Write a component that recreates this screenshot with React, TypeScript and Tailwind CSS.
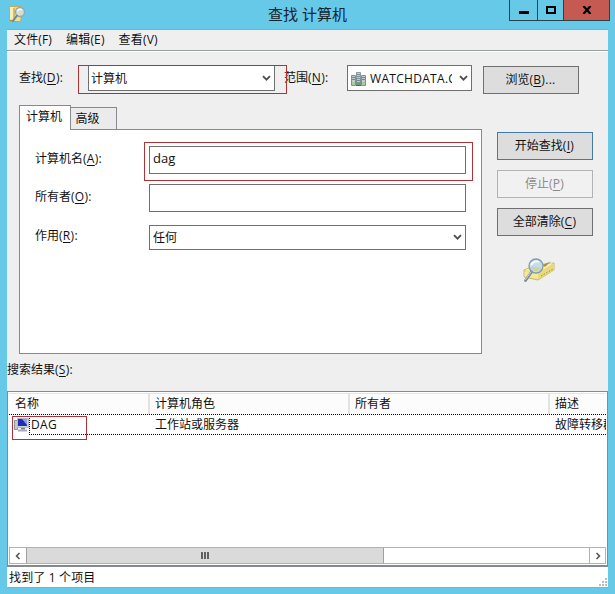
import { useState } from "react";
import type { ReactNode } from "react";

const columns = [
  { label: "名称", width: "w-[141px] pl-1.5" },
  { label: "计算机角色", width: "w-[200px] pl-[5px]" },
  { label: "所有者", width: "w-[200px] pl-[5px]" },
  { label: "描述", width: "w-[56px] pl-[5px]" },
];

const menus = [
  { text: "文件", hotkey: "F" },
  { text: "编辑", hotkey: "E" },
  { text: "查看", hotkey: "V" },
];

// Label with its underlined access key, e.g. 查找(D):
function Label({ text, hotkey, tail = "" }: { text: string; hotkey: string; tail?: string }) {
  return (
    <span className="whitespace-nowrap">
      {text}
      <span className="tracking-[0.3px]">
        (<u className="underline-offset-2">{hotkey}</u>){tail}
      </span>
    </span>
  );
}

function Chevron() {
  return (
    <svg width="9" height="7" viewBox="0 0 9 7" className="shrink-0">
      <path d="M1 1.200 4.500 4.700 8 1.200" fill="none" stroke="#505050" strokeWidth="1.900" />
    </svg>
  );
}

function ScrollArrow({ className = "" }: { className?: string }) {
  return (
    <svg width="6" height="8" viewBox="0 0 6 8" className={`shrink-0 ${className}`}>
      <path d="M4.500 1 1.500 4l3 3" fill="none" stroke="#505050" strokeWidth="1.500" />
    </svg>
  );
}

function Button({ children, variant = "normal" }: { children: ReactNode; variant?: "normal" | "default" | "disabled" }) {
  const styles = {
    normal: "border-[#707070] bg-[#dddddd]",
    default: "border-[#447ba6] bg-[#dddddd]",
    disabled: "border-[#b3b3b3] bg-[#f1f1f1] text-[#8a8a8a]",
  };
  return (
    <button
      disabled={variant === "disabled"}
      className={`flex h-7 w-24 shrink-0 items-center justify-center border pr-px leading-none ${styles[variant]}`}
    >
      {children}
    </button>
  );
}

function FolderSearchIcon() {
  return (
    <svg width="18" height="18" viewBox="0 0 18 18">
      <path d="M1.500 1.500H13V15l-1 1.500H1.500z" fill="#ecdf98" stroke="#c5ab59" />
      <path d="M2 2h3.500v12H2z" fill="#f8f0ba" />
      <path d="M6 3v12M2 15.500h4" stroke="#b3943e" />
      <circle cx="12" cy="7" r="4.500" fill="#d3e0d6" fillOpacity=".9" stroke="#91a7b0" strokeWidth="1.300" />
      <path d="M9.500 6q2-3 4.500-1" stroke="#fff" strokeWidth="1.500" fill="none" />
      <path d="m9 10.500-4 5.500" stroke="#78858b" strokeWidth="2" strokeLinecap="round" />
    </svg>
  );
}

function DomainIcon() {
  return (
    <svg width="16" height="16" viewBox="0 0 16 16" className="shrink-0">
      <path d="M5.500 1.500h4v9h-4z" fill="#c9d2d5" stroke="#899aa1" />
      <path d="M.5 4.500h4v10h-4zM10.500 4.500h4v10h-4zM5.500 7.500h4v7h-4z" fill="#c3ced2" stroke="#7d9097" />
      <path d="M6 3.500h3M6 5.500h3M1 6.500h3M1 8.500h3M11 6.500h3M11 8.500h3M6 9.500h3" stroke="#738891" />
      <path d="M1 11h3v3H1zM11 11h3v3h-3z" fill="#a9cb9d" />
      <path d="M6 11h3v4H6z" fill="#63a36d" />
      <path d="M5 14.500h5" stroke="#426c54" />
    </svg>
  );
}

function ComputerIcon() {
  return (
    <svg width="16" height="14" viewBox="0 0 16 14" className="shrink-0">
      <path d="M.5 2.500h3v9h-3z" fill="#c6c9cd" stroke="#8d9299" />
      <path d="M3.500.5h11v9h-11z" fill="#cfd5df" stroke="#b0b6c3" />
      <path d="M4 1h9v7H4z" fill="#1f2fb4" />
      <path d="M8 1h5v6z" fill="#8b9ce5" />
      <path d="M7 10h4v1.500H7z" fill="#777d89" />
      <path d="M4 12.500h9" stroke="#a5abb5" strokeWidth="2" />
    </svg>
  );
}

function SearchBookIcon() {
  return (
    <svg width="34" height="26" viewBox="0 0 34 26">
      <path d="m1 12 12-5 18-2v7L15 22 1 19z" fill="#eadc83" stroke="#c0ad55" strokeWidth=".8" />
      <path d="m2 12 11-4 17-3-14 9z" fill="#faf4be" />
      <path d="m16 14 15-8v6l-15 9z" fill="#e8da7b" />
      <path d="m19 7 9-3.500L22 9z" fill="#aa9142" />
      <path d="m18 18 12-7" stroke="#9d8c43" strokeDasharray="1.500 1.500" />
      <path d="M1.500 13.500H15v7.500L1.500 18.500z" fill="#f3e99d" />
      <circle cx="13" cy="8" r="7" fill="#c3dde9" fillOpacity=".95" stroke="#8299b2" strokeWidth="1.300" />
      <path d="M7.500 9q6-1 11 1a6 6 0 0 1-11-1z" fill="#cbd3a9" />
      <path d="M8 7q3-5 8-3" stroke="#fff" strokeWidth="1.800" fill="none" />
      <path d="m8.500 14-6 8.500" stroke="#7f8a95" strokeWidth="2.800" strokeLinecap="round" />
      <path d="m8 14-5.500 7.500" stroke="#d2d9df" strokeLinecap="round" />
    </svg>
  );
}

function TitleBar() {
  return (
    <header className="relative flex h-[29px] items-center justify-center">
      <div className="absolute left-2 top-[5px]">
        <FolderSearchIcon />
      </div>
      <h1 className="text-[15px] leading-none text-[#14242b]">查找 计算机</h1>
      <div className="absolute right-[5px] top-0 flex h-[21px] border-x border-b border-[#29434d]">
        <button className="flex w-[28px] justify-center border-r border-[#29434d] pt-[11px]">
          <span className="h-[3px] w-2.5 bg-black" />
        </button>
        <button className="flex w-[26px] justify-center border-r border-[#29434d] pt-1.5">
          <span className="h-2 w-2.5 border-2 border-black" />
        </button>
        <button className="flex w-[45px] justify-center bg-[#c45a51] pt-1.5">
          <svg width="10" height="8" viewBox="0 0 10 8">
            <path d="m1.500 0 7 8M8.500 0l-7 8" stroke="#000" strokeWidth="2.200" />
          </svg>
        </button>
      </div>
    </header>
  );
}

function SearchForm() {
  const [name, setName] = useState("dag");
  const [owner, setOwner] = useState("");
  return (
    <div className="h-[225px] w-[463px] border border-[#868a90] bg-white pl-[15px] pt-4">
      <div className="relative flex h-7">
        <div className="w-[114px] pt-[7px] leading-none"><Label text="计算机名" hotkey="A" tail=":" /></div>
        <input
          value={name}
          onChange={(e) => setName(e.target.value)}
          className="h-7 w-[317px] border border-[#6f6f6f] pb-[5px] pl-[3px] text-[13px] leading-none outline-none"
        />
        <div className="pointer-events-none absolute -top-1 left-[109px] h-[39px] w-[329px] border border-[#b13236]" />
      </div>
      <div className="mt-2.5 flex h-7">
        <div className="w-[114px] pt-[7px] leading-none"><Label text="所有者" hotkey="O" tail=":" /></div>
        <input
          value={owner}
          onChange={(e) => setOwner(e.target.value)}
          className="h-7 w-[317px] border border-[#6f6f6f] outline-none"
        />
      </div>
      <div className="mt-[13px] flex h-[25px]">
        <div className="w-[114px] pt-[5px] leading-none"><Label text="作用" hotkey="R" tail=":" /></div>
        <button className="flex w-[317px] items-center justify-between border border-[#6f6f6f] px-[3px] leading-none">
          任何
          <Chevron />
        </button>
      </div>
    </div>
  );
}

function Results() {
  return (
    <section className="flex h-[176px] flex-col border border-b-2 border-[#858a90] bg-white p-px leading-none">
      <div className="flex h-[21px] border-t border-[#e6e6e6] bg-[#fcfcfc]">
        {columns.map((c) => (
          <div key={c.label} className={`flex shrink-0 items-center border-r-2 border-[#e3e3e3] last:border-r-0 ${c.width}`}>
            {c.label}
          </div>
        ))}
      </div>
      <div className="relative flex h-[21px] overflow-hidden whitespace-nowrap">
        <svg width="597" height="21" className="pointer-events-none absolute left-0 top-0">
          <path d="M0 .5H597M20 20.500H597M20.500 0V21" stroke="#000" strokeDasharray="1 1" fill="none" />
        </svg>
        <div className="flex w-[140px] shrink-0 items-center gap-px pl-[5px] tracking-[0.3px]">
          <ComputerIcon />
          DAG
        </div>
        <div className="flex w-[200px] shrink-0 items-center pl-1.5">工作站或服务器</div>
        <div className="w-[200px] shrink-0" />
        <div className="flex w-[57px] shrink-0 items-center overflow-hidden pl-1.5">故障转移群集</div>
      </div>
      <div className="mt-auto flex h-[17px] border border-[#b2b2b2]">
        <button className="flex w-4 items-center justify-center">
          <ScrollArrow />
        </button>
        <div className="flex w-[358px] items-center justify-center gap-px border-x border-[#a0a0a0] bg-[#dadada]">
          <span className="h-[7px] w-0.5 bg-[#606060]" />
          <span className="h-[7px] w-0.5 bg-[#606060]" />
          <span className="h-[7px] w-0.5 bg-[#606060]" />
        </div>
        <button className="ml-auto flex w-4 items-center justify-center border-l border-[#b2b2b2]">
          <ScrollArrow className="rotate-180" />
        </button>
      </div>
    </section>
  );
}

export default function App() {
  return (
    <div className="h-[594px] w-[615px] overflow-hidden bg-[#66c9e8] font-['Open_Sans','Noto_Sans_CJK_SC',sans-serif] text-[12px] text-[#111]">
      <TitleBar />
      <main className="ml-[7px] w-[601px] border-t border-[#8baab5] bg-[#efefef]">
        <nav className="flex h-[21px] items-center gap-3.5 border-b border-[#999ea1] pl-[7px] leading-none">
          {menus.map((m) => (
            <button key={m.hotkey} className="tracking-[0.15px]">
              {m.text}({m.hotkey})
            </button>
          ))}
        </nav>
        <div className="relative flex h-[54px] border-t border-white pl-3 pt-[13px]">
          <div className="w-[69px] pt-[7px] leading-none"><Label text="查找" hotkey="D" tail=":" /></div>
          <button className="flex h-[26px] w-[187px] items-center justify-between border border-[#6f6f6f] bg-white pl-0.5 pr-[3px] pt-px leading-none">
            计算机
            <Chevron />
          </button>
          <div className="w-[72px] pl-[9px] pt-[7px] leading-none"><Label text="范围" hotkey="N" tail=":" /></div>
          <button className="flex h-[26px] w-[125px] items-center border border-[#6f6f6f] bg-white px-[3px] pt-px leading-none">
            <DomainIcon />
            <span className="ml-[3px] mr-auto w-[82px] overflow-hidden whitespace-nowrap py-1 text-left tracking-[0.3px]">WATCHDATA.COM</span>
            <Chevron />
          </button>
          <div className="ml-[11px] pt-px">
            <Button><Label text="浏览" hotkey="B" tail="..." /></Button>
          </div>
          <div className="pointer-events-none absolute left-[71px] top-[13px] h-[29px] w-[209px] border border-[#b13236]" />
        </div>
        <div className="flex h-[249px] pl-3">
          <div>
            <div className="flex h-6 items-end leading-none">
              <button className="relative -mb-px h-[25px] w-[52px] border border-b-0 border-[#868a90] bg-white pb-0.5 pr-0.5">计算机</button>
              <button className="h-[22px] w-[46px] border border-b-0 border-l-0 border-[#868a90] bg-[#ebebeb] pr-3">高级</button>
            </div>
            <SearchForm />
          </div>
          <div className="ml-[15px] flex flex-col gap-2.5 pt-[27px]">
            <Button variant="default"><Label text="开始查找" hotkey="I" /></Button>
            <Button variant="disabled"><Label text="停止" hotkey="P" /></Button>
            <Button><Label text="全部清除" hotkey="C" /></Button>
            <div className="ml-[26px] mt-3"><SearchBookIcon /></div>
          </div>
        </div>
        <div className="h-[37px] pt-2.5 leading-none"><Label text="搜索结果" hotkey="S" tail=":" /></div>
        <div className="relative">
          <Results />
          <div className="pointer-events-none absolute left-[5px] top-[25px] h-6 w-[75px] border border-[#b13236]" />
        </div>
        <footer className="flex h-[21px] items-center justify-between border-b border-[#8fabb4] bg-white pl-0.5 leading-none">
          <span className="pt-px tracking-[0.15px]">找到了 1 个项目</span>
          <svg width="10" height="10" viewBox="0 0 10 10" className="self-end">
            <path d="M7 1h2v2H7zM4 4h2v2H4zM7 4h2v2H7zM1 7h2v2H1zM4 7h2v2H4zM7 7h2v2H7z" fill="#bcbcbc" />
          </svg>
        </footer>
      </main>
    </div>
  );
}
